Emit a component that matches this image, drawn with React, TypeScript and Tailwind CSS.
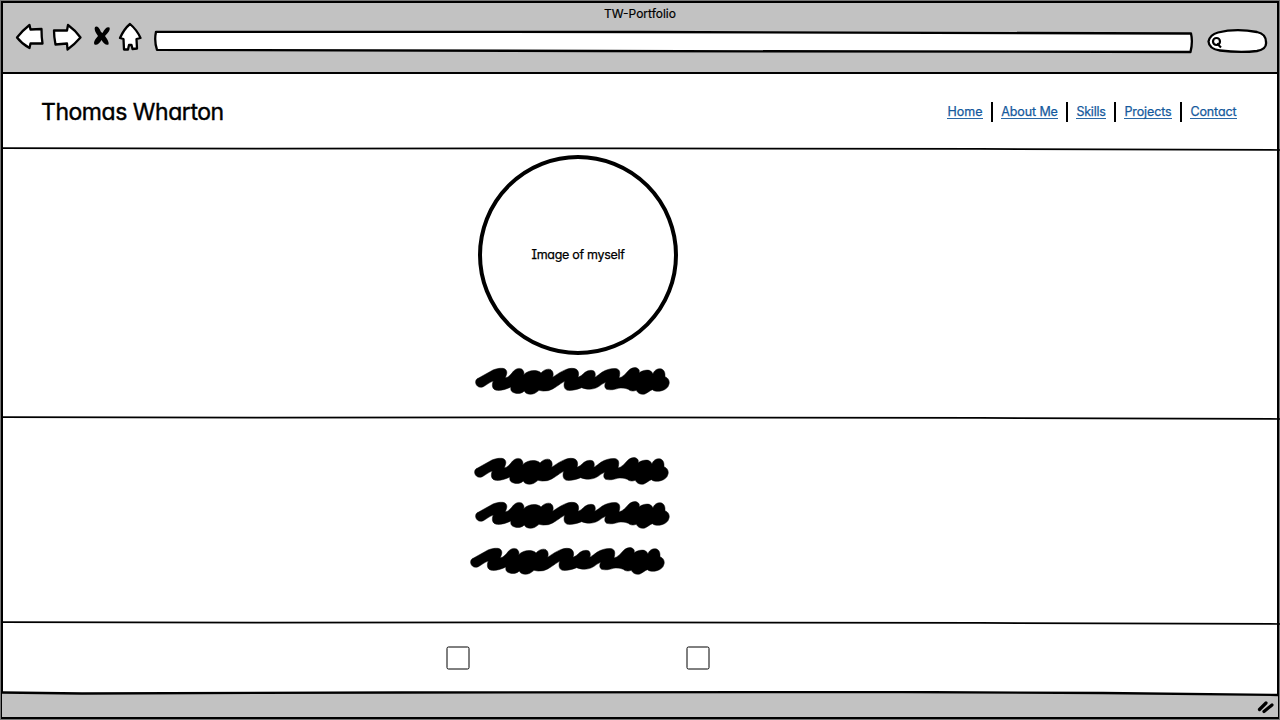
import React from "react";

const SCRIBBLE =
  "M32 86 C31 77 35 73 41 71 L84 47 C94 43 104 41 114 42 C124 44 128 52 124 62 L121 71 C132 68 138 60 145 51 C152 43 162 40 170 44 C177 49 178 56 176 61 C188 50 204 46 218 50 Q225 52 228 56 C236 46 250 42 258 46 C265 51 266 60 263 69 C278 58 290 51 302 46 C314 41 328 40 336 46 C342 52 342 61 339 69 C348 66 353 60 360 54 C368 48 380 46 387 50 C392 56 392 62 389 69 C398 65 404 58 412 53 C425 45 442 41 455 43 C466 47 466 56 462 71 C474 68 482 58 490 49 C498 41 508 38 516 41 C524 45 524 51 522 56 C532 48 545 46 553 48 Q560 51 564 58 C569 46 580 41 590 44 C599 48 601 57 600 67 C610 71 615 80 612 90 C610 100 601 106 591 109 C581 112 570 112 562 106 C553 110 548 115 540 119 C530 122 519 118 514 108 C504 112 495 110 490 105 C480 101 470 100 460 102 C449 106 437 108 425 105 C418 101 418 92 422 84 C410 89 405 95 397 99 C386 105 368 107 350 100 C335 106 322 109 308 108 C297 105 295 94 299 81 C284 88 268 105 250 109 Q232 112 222 108 C214 115 206 120 196 120 C186 119 180 116 178 110 C170 118 158 119 149 116 C138 113 136 106 138 98 C122 105 110 109 95 108 C82 106 79 93 85 80 C75 83 64 92 55 97 C44 102 34 96 32 86Z";

function Scribble({ className }: { className: string }) {
  return (
    <svg className={`block h-[28px] w-[195.3px] shrink-0 ${className}`} viewBox="30 38 586 84">
      <path d={SCRIBBLE} fill="#000" stroke="#000" strokeWidth="1.5" />
    </svg>
  );
}

function Rule() {
  return (
    <svg className="-mr-[3px] -ml-[2px] block h-[4px] shrink-0" viewBox="0 0 1280 4" preserveAspectRatio="none">
      <path d="M0 1.1 L260 1.6 L620 1.4 L980 1.9 L1280 3" stroke="#000" strokeWidth="1.7" fill="none" />
    </svg>
  );
}

function Toolbar() {
  const outline = { fill: "#fff", stroke: "#000", strokeWidth: 2.3, strokeLinejoin: "round" as const };
  return (
    <div className="flex h-[46px] items-start">
      <svg className="ml-[12px] h-[30px] w-[130px] shrink-0" viewBox="15 22 130 30">
        <path {...outline} d="M17 37.5 Q23 30 29.5 25 L30.5 29.5 L41.5 29 Q41.5 37 42.5 43.5 L30.5 43.5 L29.5 48 Q22 44 17 37.5Z" />
        <path {...outline} d="M54 30.5 L67 30.5 L68 25 Q75 30 80.5 37.5 Q74 45 67.5 49.5 L67 43.5 L55.5 44.5 Q54 37 54 30.5Z" />
        <path {...outline} d="M130 24 Q137 30 140.5 38 L136.5 39 L137 48.5 L132.5 49 L131.5 45 L129 45 L128 49.5 L124 49.5 L123.5 39 L120 38 Q124 29 130 24Z" />
        <path d="M95 27 Q98 25 101 32 L102.5 33 Q106 26 109.5 27.5 Q111 30 105 36 Q109.5 42 108.5 44.5 Q105 46 101.5 40 Q98 46 94.5 44.5 Q92.5 42 98 36 Q93.5 30 95 27Z" fill="#000" />
      </svg>
      <svg className="mt-[6.5px] ml-[7px] h-[26px] w-[1042px] shrink-0" viewBox="152 29 1042 26">
        <path {...outline} d="M156 31.8 L640 32 L1191 33.5 Q1193 42 1190.5 52 L600 51 L157 49.8 Q154 41 156 31.8Z" />
      </svg>
      <svg className="mt-[6px] ml-[12px] h-[28px] w-[62px] shrink-0" viewBox="1206 28 62 28">
        <path {...outline} d="M1218 32.5 Q1236 28 1257 32 Q1266 34 1266 42 Q1267 49 1257 51 Q1240 53 1220 50.5 Q1209 49 1208.5 41.5 Q1210 34.5 1218 32.5Z" />
        <circle cx="1216.5" cy="41.5" r="3.5" fill="none" stroke="#000" strokeWidth="2.2" />
        <path d="M1217 43.5 L1221 47.5" stroke="#000" strokeWidth="2.2" />
      </svg>
    </div>
  );
}

const links = [
  { label: "Home", box: "w-[36px] tracking-[-0.05px]" },
  { label: "About Me", box: "w-[57px] tracking-[-0.1px]" },
  { label: "Skills", box: "w-[30px] tracking-[-0.25px]" },
  { label: "Projects", box: "w-[48px] tracking-[-0.1px]" },
  { label: "Contact", box: "w-[47px] tracking-[-0.1px]" },
];

export default function App() {
  return (
    <div className="h-[720px] w-[1280px] overflow-hidden bg-[#777] p-px font-['Inter',sans-serif] text-black [font-feature-settings:'cv11','cv08']">
      <div className="flex h-[718px] flex-col border-[2.5px] border-black bg-white">
        <header className="h-[71px] shrink-0 border-b-2 border-black bg-[#c2c2c2]">
          <div className="flex h-[19px] items-center justify-center pt-[3px] text-[12px] [-webkit-text-stroke:0.2px_black]">TW-Portfolio</div>
          <Toolbar />
        </header>
        <div className="flex h-[73px] shrink-0 items-center justify-between pr-[40px] pl-[38px]">
          <h1 className="pt-[2px] text-[23px] leading-[30px] tracking-[-0.46px] whitespace-nowrap [-webkit-text-stroke:0.4px_black]">Thomas Wharton</h1>
          <nav className="flex items-center pt-[2px]">
            {links.map((l, i) => (
              <React.Fragment key={l.label}>
                {i > 0 && <span className="mr-[8px] ml-[8px] h-[20px] w-[2px] bg-black" />}
                <a className={`flex h-[15px] justify-center border-b border-[#2767a5] text-[12.5px] leading-[15px] whitespace-nowrap text-[#155a9d] [-webkit-text-stroke:0.25px_#155a9d] ${l.box}`}>{l.label}</a>
              </React.Fragment>
            ))}
          </nav>
        </div>
        <Rule />
        <section className="flex h-[265px] shrink-0 flex-col pt-[4px]">
          <div className="ml-[475px] flex size-[200px] shrink-0 items-center justify-center rounded-full border-4 border-black text-[12.5px] tracking-[-0.3px] [-webkit-text-stroke:0.25px_black]">
            Image of myself
          </div>
          <Scribble className="mt-[12px] ml-[472px]" />
        </section>
        <Rule />
        <section className="h-[201px] shrink-0 pt-[36.5px]">
          <Scribble className="ml-[471px]" />
          <Scribble className="mt-[16px] ml-[472px]" />
          <Scribble className="mt-[18px] ml-[467px]" />
        </section>
        <Rule />
        <section className="flex h-[66px] shrink-0 gap-[216px] pt-[21px] pl-[443px]">
          <svg className="size-[24px]" viewBox="0 0 24 24"><rect x="1" y="1" width="22" height="22" rx="1.5" fill="#fff" stroke="#000" strokeWidth="1" /></svg>
          <svg className="size-[24px]" viewBox="0 0 24 24"><rect x="1" y="1" width="22" height="22" rx="1.5" fill="#fff" stroke="#000" strokeWidth="1" /></svg>
        </section>
        <footer className="-mx-px min-h-0 flex-1">
          <svg className="block h-full w-full" viewBox="0 0 1275 26" preserveAspectRatio="none">
            <path d="M0 1.5 L80 2.5 L400 1.5 L900 1 L1100 2 L1275 4 V27 H0Z" fill="#c2c2c2" />
            <path d="M0 1.5 L80 2.5 L400 1.5 L900 1 L1100 2 L1275 4" fill="none" stroke="#000" strokeWidth="2.3" />
            <path d="M1256.5 18.5 L1263 12 M1261 20.5 L1269 14" stroke="#000" strokeWidth="3.2" strokeLinecap="round" />
          </svg>
        </footer>
      </div>
    </div>
  );
}
